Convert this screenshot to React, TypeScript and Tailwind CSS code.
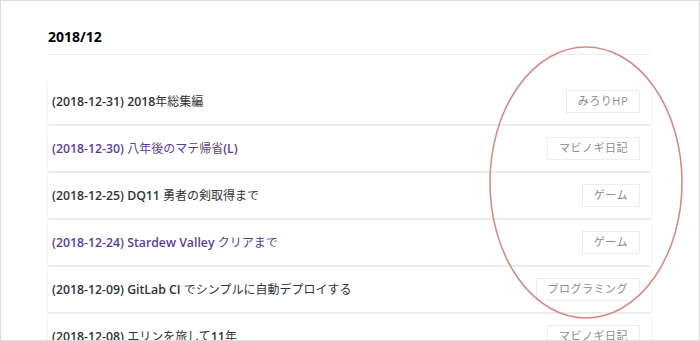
import React from 'react';

type Post = {
  date: string;
  title: string;
  tag: string;
  visited?: boolean;
};

const posts: Post[] = [
  { date: '2018-12-31', title: '2018年総集編', tag: 'みろりHP' },
  { date: '2018-12-30', title: '八年後のマテ帰省(L)', tag: 'マビノギ日記', visited: true },
  { date: '2018-12-25', title: 'DQ11 勇者の剣取得まで', tag: 'ゲーム' },
  { date: '2018-12-24', title: 'Stardew Valley クリアまで', tag: 'ゲーム', visited: true },
  { date: '2018-12-09', title: 'GitLab CI でシンプルに自動デプロイする', tag: 'プログラミング' },
  { date: '2018-12-08', title: 'エリンを旅して11年', tag: 'マビノギ日記' },
];

// 英数字は太字、和文は通常の太さで描く（和文フォントに太字がない見た目を再現）
function Mixed({ text }: { text: string }) {
  const runs = text.match(/[\x00-\x7F]+|[^\x00-\x7F]+/g) || [];
  return (
    <>
      {runs.map((r, i) =>
        /^[\x00-\x7F]+$/.test(r) ? (
          <span key={i} className="font-semibold">{r}</span>
        ) : (
          <span key={i} className="font-normal text-[12px]">{r}</span>
        )
      )}
    </>
  );
}

export default function App() {
  return (
    <div
      className="relative w-[700px] h-[341px] overflow-hidden border border-[#dcdcdc] bg-white"
      style={{ fontFamily: '"Open Sans", "Noto Sans CJK JP", sans-serif' }}
    >
      <div className="pl-[47px] pr-[48px] pt-[26px]">
        {/* 見出し */}
        <h2 className="h-[20px] leading-[20px] text-[14px] font-bold text-black">2018/12</h2>
        <div className="mt-[7px] border-b border-[#eeeeee]" />

        {/* 記事一覧 */}
        <div className="mt-[24px] flex flex-col gap-[2px]">
          {posts.map((p) => (
            <div
              key={p.date}
              className="h-[45px] flex items-center justify-between bg-white pl-[4px] pr-[11px] shadow-[0_2px_3px_rgba(0,0,0,0.1)]"
            >
              <span
                className={
                  'text-[12.3px] leading-[18px] ' + (p.visited ? 'text-[#5a3d9a]' : 'text-[#333333]')
                }
              >
                <Mixed text={`(${p.date}) ${p.title}`} />
              </span>
              <span className="h-[23px] flex items-center px-[11px] border border-[#eeeeee] text-[11px] text-[#8c8c8c] tracking-[0.5px]">
                {p.tag}
              </span>
            </div>
          ))}
        </div>
      </div>

      {/* 注釈の赤丸 */}
      <svg className="absolute left-0 top-0 pointer-events-none" width="700" height="341">
        <ellipse cx="585" cy="181.5" rx="96" ry="135.5" fill="none" stroke="#d48a8a" strokeWidth="1.6" />
      </svg>
    </div>
  );
}
